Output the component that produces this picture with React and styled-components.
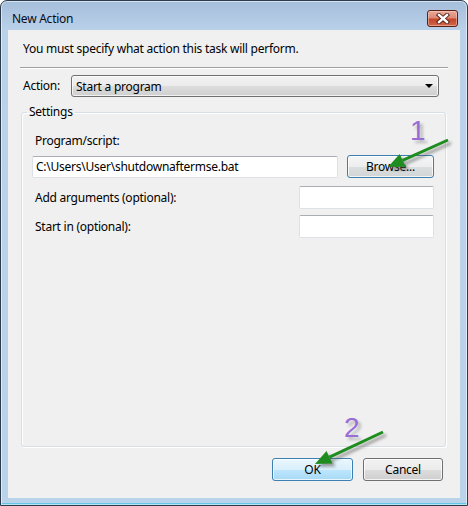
import React from 'react';
import styled, { createGlobalStyle } from 'styled-components';

const GlobalStyle = createGlobalStyle`
  html, body {
    margin: 0;
    padding: 0;
    background: #ffffff;
  }
  body {
    font-family: "Noto Sans", "Open Sans", sans-serif;
    font-size: 12px;
    letter-spacing: -0.25px;
  }
`;

const Window = styled.div`
  position: relative;
  box-sizing: border-box;
  width: 468px;
  height: 506px;
  display: flex;
  flex-direction: column;
  padding: 0 7px 7px 7px;
  border: 1px solid #2e3b4c;
  border-radius: 7px 7px 0 0;
  background: linear-gradient(to bottom, #a5bedb 0px, #bad1ea 30px, #b9d3ea 100%);
  box-shadow: inset 0 0 0 1px rgba(255, 255, 255, 0.55), inset 0 -2px 0 #62c6e6;
`;

const TitleBar = styled.div`
  height: 29px;
  display: flex;
  align-items: center;
  justify-content: space-between;
  box-sizing: border-box;
  padding: 6px 2px 0 4px;
`;

const Title = styled.span`
  font-size: 12px;
  color: #0a0a14;
  line-height: 16px;
`;

const CloseButton = styled.div`
  width: 31px;
  height: 17px;
  box-sizing: border-box;
  display: flex;
  align-items: center;
  justify-content: center;
  border: 1px solid #5a2216;
  border-radius: 3px;
  background: linear-gradient(to bottom, #e9a99a 0%, #dd8a76 45%, #c4462a 55%, #d0684c 100%);
  box-shadow: inset 0 0 0 1px rgba(255, 220, 210, 0.45);
`;

const Client = styled.div`
  flex: 1;
  display: flex;
  flex-direction: column;
  background: #f0f0f0;
  padding: 11px 0 17px 0;
  box-sizing: border-box;
`;

const Instruction = styled.div`
  padding-left: 15px;
  line-height: 16px;
  color: #000;
`;

const Separator = styled.div`
  margin: 10px 12px 0 12px;
  height: 1px;
  background: #a0a0a0;
  border-bottom: 1px solid #ffffff;
`;

const ActionRow = styled.div`
  display: flex;
  align-items: center;
  margin: 6px 21px 0 15px;
`;

const Label = styled.span`
  color: #000;
  line-height: 16px;
  white-space: nowrap;
`;

const ActionLabel = styled(Label)`
  width: 48px;
`;

const Select = styled.div`
  flex: 1;
  height: 22px;
  box-sizing: border-box;
  display: flex;
  align-items: center;
  justify-content: space-between;
  padding: 0 5px 0 4px;
  border: 1px solid #707070;
  border-radius: 3px;
  background: linear-gradient(to bottom, #f2f2f2 0%, #ebebeb 50%, #dddddd 51%, #cfcfcf 100%);
  box-shadow: inset 0 0 0 1px rgba(255, 255, 255, 0.7);
`;

const Arrow = styled.span`
  width: 0;
  height: 0;
  border-left: 4px solid transparent;
  border-right: 4px solid transparent;
  border-top: 4px solid #000;
`;

const Group = styled.fieldset`
  flex: 1;
  margin: 7px 14px 0 13px;
  padding: 0;
  min-width: 0;
  border: 1px solid #d5dfe5;
  border-radius: 3px;
  box-shadow: inset 1px 1px 0 #ffffff, 1px 1px 0 #ffffff;
`;

const Legend = styled.legend`
  margin-left: 5px;
  padding: 0 2px;
  line-height: 16px;
  color: #000;
`;

const GroupBody = styled.div`
  padding: 13px 11px 0 10px;
  display: flex;
  flex-direction: column;
`;

const FieldLabel = styled(Label)`
  padding-left: 3px;
`;

const Row = styled.div`
  display: flex;
  align-items: center;
  justify-content: ${(p) => (p.$spread ? 'space-between' : 'flex-start')};
  margin-top: ${(p) => p.$top || 0}px;
  padding-left: ${(p) => (p.$spread ? 3 : 0)}px;
  gap: 9px;
`;

const TextBox = styled.div`
  width: ${(p) => p.$width}px;
  height: ${(p) => p.$height || 22}px;
  box-sizing: border-box;
  display: flex;
  align-items: center;
  padding-left: 3px;
  background: #ffffff;
  border: 1px solid #dde1e7;
  border-top-color: #abadb3;
  border-radius: 2px;
  color: #000;
  white-space: nowrap;
  overflow: hidden;
`;

const Button = styled.div`
  width: ${(p) => p.$width}px;
  height: ${(p) => p.$height || 23}px;
  box-sizing: border-box;
  display: flex;
  align-items: center;
  justify-content: center;
  border-radius: 3px;
  color: #000;
  border: 1px solid ${(p) => (p.$variant === 'plain' ? '#707070' : '#3c7fb1')};
  background: ${(p) =>
    p.$variant === 'hot'
      ? 'linear-gradient(to bottom, #eaf6fd 0%, #d9f0fc 50%, #bee6fd 51%, #a7d9f5 100%)'
      : p.$variant === 'focus'
      ? 'linear-gradient(to bottom, #f4f6f6 0%, #eceeef 50%, #dcdfe0 51%, #d2d5d6 100%)'
      : 'linear-gradient(to bottom, #f2f2f2 0%, #ebebeb 50%, #dddddd 51%, #cfcfcf 100%)'};
  box-shadow: inset 0 0 0 1px rgba(255, 255, 255, 0.75);
`;

const ButtonRow = styled.div`
  display: flex;
  justify-content: flex-end;
  gap: 10px;
  margin: 11px 17px 0 0;
`;

const Overlay = styled.svg`
  position: absolute;
  left: -1px;
  top: -1px;
  width: 468px;
  height: 506px;
  pointer-events: none;
  overflow: visible;
`;

const Num = styled.text`
  font-family: "Liberation Sans", Arial, sans-serif;
  font-size: 28px;
  fill: #9a6cd6;
`;

function CloseGlyph() {
  return (
    <svg width="14" height="11" viewBox="0 0 14 11">
      <path d="M3 2 L11 9 M11 2 L3 9" stroke="#4a1a12" strokeWidth="4.2" strokeLinecap="square" />
      <path d="M3 2 L11 9 M11 2 L3 9" stroke="#ffffff" strokeWidth="2.4" strokeLinecap="square" />
    </svg>
  );
}

function Pointer({ tail, tip, base1, base2 }) {
  const shaftEnd = [(base1[0] + base2[0]) / 2, (base1[1] + base2[1]) / 2];
  const head = `${tip.join(',')} ${base1.join(',')} ${base2.join(',')}`;
  return (
    <g>
      <g filter="url(#shade)" opacity="0.55">
        <line x1={tail[0]} y1={tail[1]} x2={shaftEnd[0]} y2={shaftEnd[1]} stroke="#555" strokeWidth="3" />
        <polygon points={head} fill="#555" />
      </g>
      <line x1={tail[0]} y1={tail[1]} x2={shaftEnd[0]} y2={shaftEnd[1]} stroke="#1e8c1e" strokeWidth="3" />
      <polygon points={head} fill="#1e8c1e" />
    </g>
  );
}

export default function App() {
  return (
    <>
      <GlobalStyle />
      <Window>
        <TitleBar>
          <Title>New Action</Title>
          <CloseButton>
            <CloseGlyph />
          </CloseButton>
        </TitleBar>
        <Client>
          <Instruction>You must specify what action this task will perform.</Instruction>
          <Separator />
          <ActionRow>
            <ActionLabel>Action:</ActionLabel>
            <Select>
              <span>Start a program</span>
              <Arrow />
            </Select>
          </ActionRow>
          <Group>
            <Legend>Settings</Legend>
            <GroupBody>
              <FieldLabel>Program/script:</FieldLabel>
              <Row $top={6}>
                <TextBox $width={306}>C:\Users\User\shutdownaftermse.bat</TextBox>
                <Button $width={87} $height={23} $variant="focus">Browse...</Button>
              </Row>
              <Row $spread $top={8}>
                <Label>Add arguments (optional):</Label>
                <TextBox $width={135} $height={23} />
              </Row>
              <Row $spread $top={6}>
                <Label>Start in (optional):</Label>
                <TextBox $width={135} $height={23} />
              </Row>
            </GroupBody>
          </Group>
          <ButtonRow>
            <Button $width={81} $variant="hot">OK</Button>
            <Button $width={80} $variant="plain">Cancel</Button>
          </ButtonRow>
        </Client>
        <Overlay viewBox="0 0 468 506">
          <defs>
            <filter id="shade" x="-20%" y="-20%" width="140%" height="140%">
              <feGaussianBlur stdDeviation="1.6" />
              <feOffset dx="3" dy="3" />
            </filter>
          </defs>
          <Num x="410" y="140" filter="url(#shade)" style={{ fill: '#777', opacity: 0.5 }}>1</Num>
          <Num x="410" y="140">1</Num>
          <Pointer tail={[448, 140]} tip={[388, 167]} base1={[405.5, 166.8]} base2={[399.7, 154]} />
          <Num x="344" y="437" filter="url(#shade)" style={{ fill: '#777', opacity: 0.5 }}>2</Num>
          <Num x="344" y="437">2</Num>
          <Pointer tail={[383, 432]} tip={[315, 464]} base1={[332.5, 463.5]} base2={[326.5, 450.9]} />
        </Overlay>
      </Window>
    </>
  );
}
